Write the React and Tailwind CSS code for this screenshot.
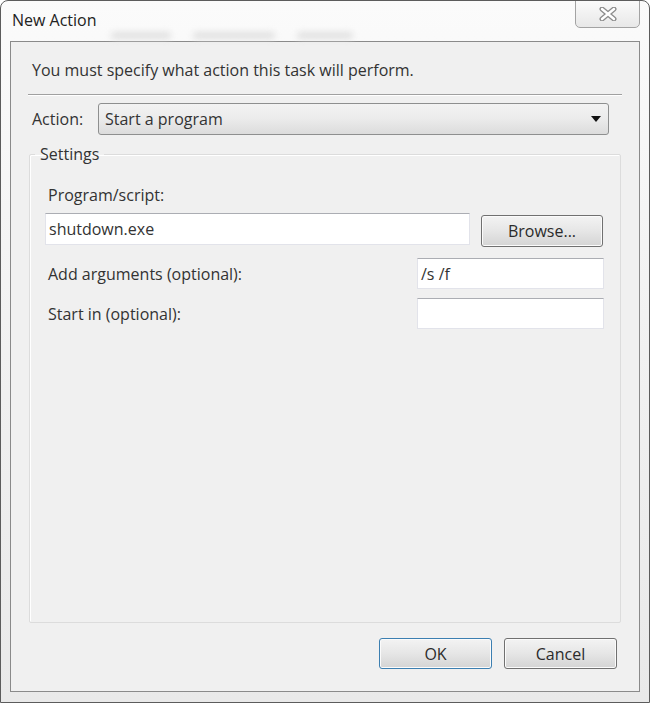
import React from "react";

const font = { fontFamily: '"Open Sans", "Noto Sans", sans-serif' };

const CloseGlyph = () => (
  <svg width="20" height="14" viewBox="0 0 20 14">
    <path d="M4 2 L16 12 M16 2 L4 12" stroke="#8c8c8c" strokeWidth="5" strokeLinecap="round" fill="none" />
    <path d="M4 2 L16 12 M16 2 L4 12" stroke="#ffffff" strokeWidth="2.4" strokeLinecap="round" fill="none" />
  </svg>
);

const TextBox = ({ value, className }) => (
  <div
    className={`h-[31px] bg-white border border-[#e2e3ea] border-t-[#abadb3] flex items-center pl-[3px] text-[#333] ${className}`}
  >
    {value}
  </div>
);

const Button = ({ label, def, className }) => (
  <button
    className={`h-[31px] w-[113px] rounded-[3px] border text-[#2b2b2b] bg-gradient-to-b from-[#f3f3f3] via-[#e6e6e6] to-[#d4d4d4] shadow-[inset_0_0_0_1px_#fbfbfb] ${
      def ? "border-[#3c7fb1] shadow-[inset_0_0_0_1px_#c4e5f6,0_0_2px_#7fb6dc]" : "border-[#707070]"
    } ${className || ""}`}
  >
    {label}
  </button>
);

export default function App() {
  return (
    <div style={font} className="w-[650px] h-[703px] bg-white">
      <div className="w-[650px] h-[703px] flex flex-col border border-[#5c5c5c] rounded-t-[8px] bg-gradient-to-b from-[#fbfbfb] via-[#f1f1f1] to-[#e9e9e9] overflow-hidden">
        {/* title bar; the smudges are the window behind the glass */}
        <div className="h-[40px] flex items-start justify-between">
          <div className="flex flex-col">
            <div className="pl-[11px] pt-[9px] text-[16px] leading-[20px] text-[#222]">New Action</div>
            <div className="pl-[110px] mt-[2px] flex gap-[22px]">
              <div className="w-[60px] h-[7px] rounded-full bg-[#e0e0e0] blur-[3px]" />
              <div className="w-[82px] h-[7px] rounded-full bg-[#e0e0e0] blur-[3px]" />
              <div className="w-[56px] h-[7px] rounded-full bg-[#e0e0e0] blur-[3px]" />
            </div>
          </div>
          <div className="mr-[9px] mt-[-1px] w-[65px] h-[28px] border border-[#a3a3a3] rounded-b-[5px] bg-gradient-to-b from-[#fafafa] to-[#e8e8e8] flex items-center justify-center">
            <CloseGlyph />
          </div>
        </div>

        {/* client area */}
        <div className="mx-[9px] mb-[10px] flex-1 flex flex-col border border-[#8a8a8a] bg-[#f0f0f0] px-[17px] pt-[18px] pb-[22px] text-[16px] text-[#333]">
          <div className="pl-[4px] leading-[20px]">You must specify what action this task will perform.</div>
          <div className="mt-[14px] border-t border-[#a0a0a0] border-b border-b-white" />

          <div className="mt-[7px] flex items-center">
            <div className="pl-[4px] w-[70px]">Action:</div>
            <div className="w-[511px] h-[32px] rounded-[3px] border border-[#8e8f8f] bg-gradient-to-b from-[#f3f3f3] via-[#ebebeb] to-[#dcdcdc] flex items-center justify-between pl-[6px] pr-[7px]">
              <span>Start a program</span>
              <svg width="10" height="6" viewBox="0 0 10 6">
                <path d="M0 0 H10 L5 6 Z" fill="#111" />
              </svg>
            </div>
          </div>

          <fieldset className="mt-[9px] flex-1 min-h-0 mx-[1px] border border-[#dcdcdc] shadow-[inset_1px_1px_0_#ffffff] rounded-[2px] px-0">
            <legend className="ml-[5px] px-[5px] leading-[20px]">Settings</legend>
            <div className="pl-[15px] pr-[16px]">
              <div className="mt-[21px] pl-[3px] leading-[20px]">Program/script:</div>
              <div className="mt-[8px] flex items-start">
                <TextBox value="shutdown.exe" className="w-[425px] h-[32px]" />
                <Button label="Browse..." className="ml-[11px] mt-[2px] w-[122px] h-[32px]" />
              </div>
              <div className="mt-[11px] flex items-center justify-between">
                <div className="pl-[3px]">Add arguments (optional):</div>
                <TextBox value="/s /f" className="w-[187px]" />
              </div>
              <div className="mt-[9px] flex items-center justify-between">
                <div className="pl-[3px]">Start in (optional):</div>
                <TextBox value="" className="w-[187px]" />
              </div>
            </div>
          </fieldset>

          <div className="mt-[15px] flex justify-end gap-[12px] pr-[5px]">
            <Button label="OK" def />
            <Button label="Cancel" />
          </div>
        </div>
      </div>
    </div>
  );
}
